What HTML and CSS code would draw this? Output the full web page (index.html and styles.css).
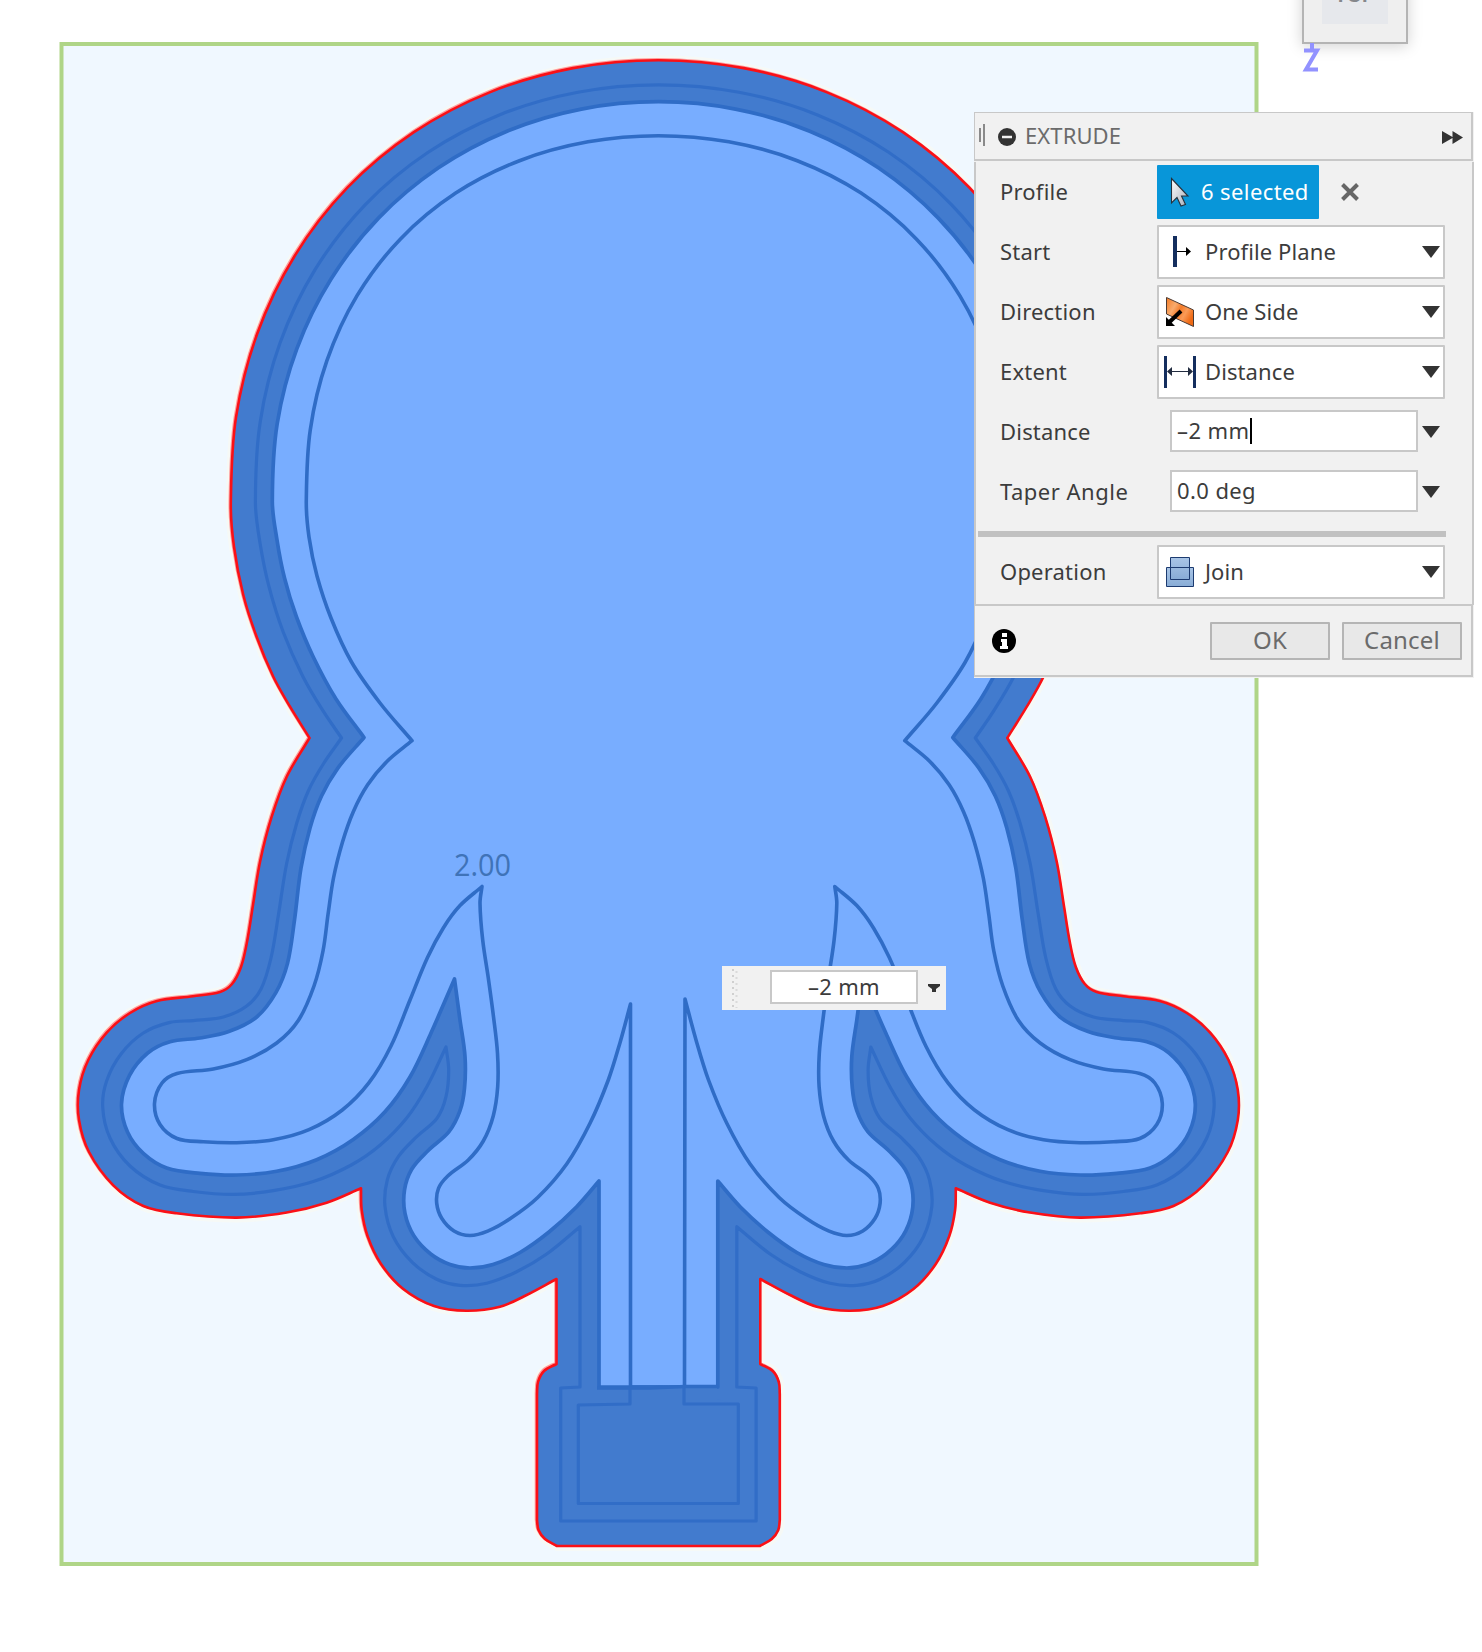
FILE: index.html
```html
<!DOCTYPE html>
<html lang="en">
<head>
<meta charset="utf-8">
<title>Extrude</title>
<link rel="stylesheet" href="styles.css">
</head>
<body>
<main class="viewport">
  <svg class="canvas" width="1482" height="1652" viewBox="0 0 1482 1652">
    <rect class="sketch-plane" x="61.5" y="44" width="1195" height="1520"/>
    <path class="halo" data-curve="outer"/>
    <path class="edge-soft" data-curve="outer" transform="translate(-.8 -.8)"/>
    <path class="body" data-curve="outer"/>
    <path class="line-faint" data-curve="offset"/>
    <path class="wall" data-curve="wall"/>
    <path class="line" data-curve="inner"/>
    <path class="socket" d="M600 1387 L633 1387 L684 1385 L717 1386 L717 1399 L738 1405 L738 1503 L578 1503 L578 1405 L600 1403Z"/>
    <path class="line-faint" d="M630 1387V1404L578.3 1405V1503.5H738.3V1404L684 1404V1386"/>
    <path class="line" d="M597 1388H650L685 1386.500H718"/>
    <text class="dim" x="454" y="875.500" textLength="57" lengthAdjust="spacingAndGlyphs">2.00</text>
  </svg>

  <div class="viewcube"><div class="cube-face">TOP</div></div>
  <svg class="axis" width="20" height="32" viewBox="0 0 20 32"><path d="M10 0v7M2 7.500h13L4 26.500h12"/></svg>

  <div class="floating">
    <svg width="10" height="40" viewBox="0 0 10 40"><path class="grip-a" d="M3 1v39"/><path class="grip-b" d="M6.500 3v37"/></svg>
    <div class="floating-input">–2 mm</div>
    <svg class="floating-arrow" width="12" height="9" viewBox="0 0 12 9"><path d="M0 0h12v2L8 5v3H4V5L0 2Z"/></svg>
  </div>

  <section class="panel">
    <header class="panel-head">
      <svg width="8" height="24" viewBox="0 0 8 24"><path class="bars" d="M2 4v14M6 0v22"/></svg>
      <svg class="collapse" width="18" height="18" viewBox="0 0 18 18"><circle cx="9" cy="9" r="9"/><path d="M4 9h10"/></svg>
      <h1 class="title">EXTRUDE</h1>
      <svg class="forward" width="21" height="13" viewBox="0 0 21 13"><path d="M0 0l10.500 6v-6L21 6.500 10.500 13V7L0 13Z"/></svg>
    </header>
    <div class="panel-body">
      <div class="row">
        <span class="label">Profile</span>
        <div class="selected">
          <svg width="20" height="30" viewBox="0 0 20 30"><defs><linearGradient id="cur" x2="1" y2="1"><stop offset="0" stop-color="#fff"/><stop offset="1" stop-color="#a8adb9"/></linearGradient></defs><path fill="url(#cur)" stroke="#26313c" stroke-width="1.100" d="M1.500 1.500V26l5.500-5.500 4 8.500 4.500-1.500-4-8.500H18Z"/></svg>
          <span class="sel-text">6 selected</span>
        </div>
        <svg class="clear" width="18" height="18" viewBox="0 0 18 18"><path d="M1.500 1.500l15 15M16.500 1.500l-15 15"/></svg>
      </div>
      <div class="row">
        <span class="label">Start</span>
        <div class="select">
          <svg width="40" height="32" viewBox="0 0 40 32"><path stroke="#142e5e" stroke-width="4" d="M15 0v31"/><path stroke="#000" d="M17 15.500h11"/><path d="M26 11l5 4.500-5 4.500Z"/></svg>
          <span class="value">Profile Plane</span><i class="arrow"></i>
        </div>
      </div>
      <div class="row">
        <span class="label">Direction</span>
        <div class="select">
          <svg width="40" height="32" viewBox="0 0 40 32"><defs><linearGradient id="org" x2="1" y2=".6"><stop offset="0" stop-color="#f47b24"/><stop offset=".35" stop-color="#f8ab6e"/><stop offset=".55" stop-color="#f37a28"/><stop offset=".75" stop-color="#fb9b57"/><stop offset="1" stop-color="#ef6a15"/></linearGradient></defs><path fill="url(#org)" stroke="#4a3a33" d="M6.500 1.500L33.500 14v16.500L6.500 18Z"/><path stroke="#000" stroke-width="4" d="M21 15L9 26.500"/><path d="M6 21v9h9Z"/></svg>
          <span class="value">One Side</span><i class="arrow"></i>
        </div>
      </div>
      <div class="row">
        <span class="label">Extent</span>
        <div class="select">
          <svg width="40" height="32" viewBox="0 0 40 32"><path stroke="#142e5e" stroke-width="3" d="M5.500 0v32M34.500 0v32"/><path stroke="#222c40" d="M9 15.500h22"/><path fill="#222c40" d="M7 15.500l5-4.500v9ZM33 15.500l-5-4.500v9Z"/></svg>
          <span class="value">Distance</span><i class="arrow"></i>
        </div>
      </div>
      <div class="row">
        <span class="label">Distance</span>
        <div class="input"><span>–2 mm</span><i class="caret"></i></div><i class="arrow out"></i>
      </div>
      <div class="row">
        <span class="label wide">Taper Angle</span>
        <div class="input"><span>0.0 deg</span></div><i class="arrow out"></i>
      </div>
      <hr class="divider">
      <div class="row">
        <span class="label">Operation</span>
        <div class="select">
          <svg width="40" height="32" viewBox="0 0 40 32"><defs><linearGradient id="blu" x2="0" y2="1"><stop offset="0" stop-color="#a9c5e6"/><stop offset="1" stop-color="#88acd6"/></linearGradient></defs><path fill="url(#blu)" stroke="#1c3b70" d="M6.500 11.500h27v19h-27Z"/><path fill="url(#blu)" stroke="#1c3b70" d="M10.500 1.500h19v22h-19Z"/><path stroke="#1c3b70" d="M10 11.500h20"/></svg>
          <span class="value">Join</span><i class="arrow"></i>
        </div>
      </div>
    </div>
    <footer class="panel-foot">
      <svg class="info" width="24" height="24" viewBox="0 0 24 24"><circle cx="12" cy="12" r="12"/><path fill="#fff" d="M10 4h5v4h-5ZM9 10h6v7h1v3H8v-3h2v-4H9Z"/></svg>
      <button class="btn">OK</button>
      <button class="btn">Cancel</button>
    </footer>
  </section>
</main>
<script src="sketch.js"></script>
</body>
</html>
```
FILE: styles.css
```css
* { box-sizing: border-box; }
body { margin: 0; background: #fff; font-family: "Noto Sans", "Open Sans", sans-serif; }
.viewport { position: relative; width: 1482px; height: 1652px; overflow: hidden; }
.canvas { display: block; }
.canvas path { fill: none; stroke-linejoin: round; }
.sketch-plane { fill: #f0f8ff; stroke: #afd587; stroke-width: 4; }
.canvas .halo { stroke: #f6f9f6; stroke-width: 10; }
.canvas .edge-soft { stroke: #ff9c9c; stroke-width: 3; }
.canvas .body { fill: #427bce; stroke: #fa1016; stroke-width: 2.6; }
.canvas .wall { fill: #78adff; stroke: #2f6cc6; stroke-width: 3.7; }
.canvas .line { stroke: #2f6cc6; stroke-width: 3.6; }
.canvas .line-faint { stroke: #316dc7; stroke-width: 3.2; }
.canvas .socket { fill: #427bce; }
.dim { font-size: 31px; font-family: "Open Sans", sans-serif; fill: #3f73b8; }

.viewcube { position: absolute; left: 1302px; top: -64px; width: 106px; height: 108px; padding: 0 20px 18px; background: #efefef; border: 2px solid #b4b4b4; box-shadow: 0 2px 14px rgba(0,0,0,.18); display: flex; }
.cube-face { flex: 1; margin: 0 -2px; background: #e6e8ec; color: #85878b; font: 700 20px/1 "Liberation Sans", sans-serif; display: flex; align-items: flex-end; justify-content: center; padding-bottom: 19px; }
.axis { position: absolute; left: 1302px; top: 43px; }
.axis path { fill: none; stroke: #9292ff; stroke-width: 4; }

.floating { position: absolute; left: 722px; top: 966px; width: 224px; height: 44px; padding: 0 6px 0 8px; display: flex; align-items: center; background: #f1f1f1; color: #3c3c3c; }
.floating svg { flex: none; fill: none; stroke-width: 2; }
.grip-a { stroke: #cfcfcf; stroke-dasharray: 2 4; }
.grip-b { stroke: #dadada; stroke-dasharray: 2 4; }
.floating-input { margin: -2px 0 0 30px; width: 148px; height: 34px; border: 2px solid #c8c8c8; background: #fff; text-align: center; font-size: 22px; line-height: 29px; letter-spacing: .3px; }
.floating .floating-arrow { margin-left: 10px; fill: #333; }

.panel { position: absolute; left: 974px; top: 112px; width: 500px; height: 566px; display: flex; flex-direction: column; color: #3c3c3c; font-size: 22px; background: #f1f1f1; }
.panel-head { height: 49px; margin-right: 1px; padding: 0 8px 0 3px; border: 1px solid #c8c8c8; border-width: 1px 2px 2px 1px; display: flex; align-items: center; }
.bars { stroke: #8a8a8a; stroke-width: 2; }
.collapse { margin: 1px 0 0 12px; fill: #333; }
.collapse path { stroke: #f1f1f1; stroke-width: 2.5; }
.title { margin: -2px 0 0 9px; font-size: 22px; font-weight: 400; color: #6b6b6b; letter-spacing: .1px; }
.forward { margin: 3px 0 0 auto; fill: #333; }
.panel-body { flex: none; height: 443px; margin-top: 1px; border: solid #c8c8c8; border-width: 0 2px; }
.row { height: 60px; padding-left: 24px; display: flex; align-items: center; }
.label { width: 157px; margin-top: -2px; white-space: nowrap; letter-spacing: .2px; }
.label.wide { letter-spacing: .5px; }
.selected { width: 162px; height: 54px; background: #0896d9; border-radius: 1px; color: #fff; display: flex; align-items: center; padding-left: 13px; }
.sel-text { margin: -2px 0 0 11px; white-space: nowrap; letter-spacing: .4px; }
.clear { margin-left: 22px; fill: none; stroke: #666; stroke-width: 4; }
.select { width: 288px; height: 54px; border: 2px solid #c8c8c8; border-radius: 1px; background: #fff; display: flex; align-items: center; padding: 0 3px 0 1px; }
.select svg { flex: none; }
.value { margin: -2px 0 0 5px; white-space: nowrap; letter-spacing: .1px; }
.arrow { margin-left: auto; width: 18px; height: 12px; background: #333; clip-path: polygon(0 0, 100% 0, 50% 100%); }
.arrow.out { margin-left: 4px; }
.input { margin: -2px 0 0 13px; width: 248px; height: 42px; border: 2px solid #c8c8c8; background: #fff; padding-left: 5px; display: flex; align-items: center; letter-spacing: .4px; }
.input span { margin-top: -2px; }
.caret { width: 2px; height: 26px; background: #000; margin-left: 1px; }
.divider { width: 468px; height: 6px; margin: 9px 0 5px 2px; border: 0; background: #c1c1c1; }
.panel-foot { flex: 1; margin: -1px 1px 1px 0; border: solid #c8c8c8; border-width: 2px 2px 2px 1px; padding: 0 9px 0 17px; display: flex; align-items: center; gap: 12px; }
.info { margin-right: auto; }
.btn { width: 120px; height: 38px; padding: 0 0 1px; border: 2px solid #b5b5b5; border-radius: 1px; background: #e8e8e8; color: #6b6b6b; font: 24px/32px "Noto Sans", "Open Sans", sans-serif; letter-spacing: .2px; }
```
FILE: sketch.js
```js
// Sketch curves. "head" is the dome: radius r, swelling by k on the diagonals.
// "left" continues it down the left side to the stem; the right half is the
// mirror of both. "!" marks a sharp corner.
const AXIS = 658.4;
const HEAD_Y = 488;
const curves = {
  outer: {
    head: [427.8, 4.5],
    left: `234,546.7 243.3,595 256.7,637 273.3,676.7 290,706.7 309.500,738! 286.7,776.7 271.7,816.7 260,862 253,905 247,942 241,967 232,984 220,992 193,996.3 157,1001 130,1013 106.7,1032.6 88.3,1060 79,1090 79,1120 89,1152 113.3,1185.3 143.3,1206 176.7,1213.3 236.7,1217.6 286.7,1212.500 326.7,1202.7 361,1188.3! 361.7,1210 367.500,1236 381,1264 403.3,1289 434,1306 466.7,1310.7 500,1306.7 526.7,1295 556.500,1279! 556.500,1364! 544,1371 538,1382 537,1394! 537,1520! 538.500,1530 545,1539 557,1546!`
  },
  offset: {
    head: [403.2, 4.5],
    left: `260,543 269,586.7 283.3,632.3 302.500,675.7 322.3,709.7 341.500,738! 323.3,764 308.3,791 296.7,823.3 286.7,863.3 278.500,914.500 271,958 261,989 246.7,1006 223.3,1017 193.3,1020.6 170,1022.4 143.3,1033 121,1054 106.7,1080.7 102.7,1107 110,1138 130,1166 160,1185 193.3,1191.500 233.3,1194.4 273.3,1190.7 313.3,1181.6 351.3,1165 380,1145.3 406.7,1118 426.7,1087 446,1047! 448.7,1070 446,1096.7 437,1118.3 416.7,1136.7 398.3,1156.7 387.3,1180 385,1206.7 393.3,1236.7 412.3,1262.3 436.7,1279.3 460,1285.3 486.7,1283.3 516.7,1271.7 546.7,1254 580,1226.7! 580,1387! 560.7,1388! 560.7,1521!`
  },
  wall: {
    head: [386.3, 2.5],
    left: `277,540 284.500,578 296.500,617 313.3,657 336,699 364,737.500! 337.7,768.3 321.500,796 310,828 301,868 294.500,920 287.500,963.4 276,992.4 256.7,1017 228.7,1031.6 200,1038 170,1041.7 147.7,1053 129.500,1075.4 121.500,1104 127.500,1132 143.3,1153.4 166.7,1168 200,1173.3 236.7,1175 276.7,1171.3 316.7,1159.7 353.3,1139.500 385,1111.8 410,1077 431,1033 454.500,979! 460,1020 465,1056.7 464.500,1088 460,1110.7 449,1131.7 427.7,1151 411.7,1169.3 404.500,1190 405,1213.3 414,1236 430.7,1254 450,1264.500 470,1268 493,1264.500 520,1252.500 549,1232 576.7,1206.7 599,1181! 599,1387!`
  },
  inner: {
    head: [352.3, 6.3],
    left: `309,537 317,576 331,618 351.500,662 380,703 412,740.7! 386.7,761.7 367.500,785 353.3,811.7 342.500,842 333.500,878 328,914.500 323,951 314,986 298.3,1020.500 276.7,1043 246.7,1059.7 213.3,1069 177,1073.500 162,1083 154.500,1103.500 160,1124.500 177,1138.500 203.3,1141.7 236.7,1142.7 273.3,1139.8 309,1129.7 342.3,1110 369,1082.7 391,1046 410,1000 427.500,957.500 443.3,928 460,905.6 482,886.500! 480,903.3 482.7,940 488.3,978 493.500,1016.7 497.500,1053.3 497.7,1086.7 493.3,1115.7 483.3,1141 468.3,1160 447.500,1176.2 438.500,1188.3 436.7,1203.3 441.7,1218.3 454,1231 470,1235.500 487.7,1231.2 510,1218.8 537.7,1197.500 566.7,1164 590,1123.3 608.3,1080 620,1042.7`,
    middle: `630.500,1004! 630.500,1387! 684.500,1387! 685,999!`
  }
};

function parse(list) {
  return (list || "").trim().split(/\s+/).filter(Boolean).map(item => {
    const [x, y] = item.replace("!", "").split(",").map(Number);
    return { x, y, corner: item.endsWith("!") };
  });
}

function dome([r, k]) {
  const points = [];
  for (let deg = 0; deg <= 92; deg += 11.5) {
    const t = deg * Math.PI / 180;
    const radius = r + k * Math.sin(2 * t) ** 2;
    points.push({ x: AXIS - radius * Math.sin(t), y: HEAD_Y - radius * Math.cos(t) });
  }
  return points;
}

// Handle at p, along the direction from a to b, a third of the segment long.
function handle(p, a, b, length) {
  const dx = b.x - a.x, dy = b.y - a.y, size = Math.hypot(dx, dy) || 1;
  return [p.x + dx / size * length / 3, p.y + dy / size * length / 3];
}

function toPath(points) {
  const n = points.length;
  let d = `M${points[0].x} ${points[0].y}`;
  for (let i = 0; i < n; i++) {
    const b = points[i], c = points[(i + 1) % n];
    const a = points[(i - 1 + n) % n], e = points[(i + 2) % n];
    const length = Math.hypot(c.x - b.x, c.y - b.y);
    const h1 = b.corner ? handle(b, b, c, length) : handle(b, a, c, length);
    const h2 = c.corner ? handle(c, c, b, length) : handle(c, e, b, length);
    d += "C" + [...h1, ...h2, c.x, c.y].map(v => v.toFixed(1)).join(" ");
  }
  return d + "Z";
}

for (const [name, curve] of Object.entries(curves)) {
  const left = [...dome(curve.head), ...parse(curve.left)];
  const right = left.slice(1).reverse().map(p => ({ ...p, x: 2 * AXIS - p.x }));
  const d = toPath([...left, ...parse(curve.middle), ...right]);
  document.querySelectorAll(`[data-curve="${name}"]`).forEach(el => el.setAttribute("d", d));
}
```
